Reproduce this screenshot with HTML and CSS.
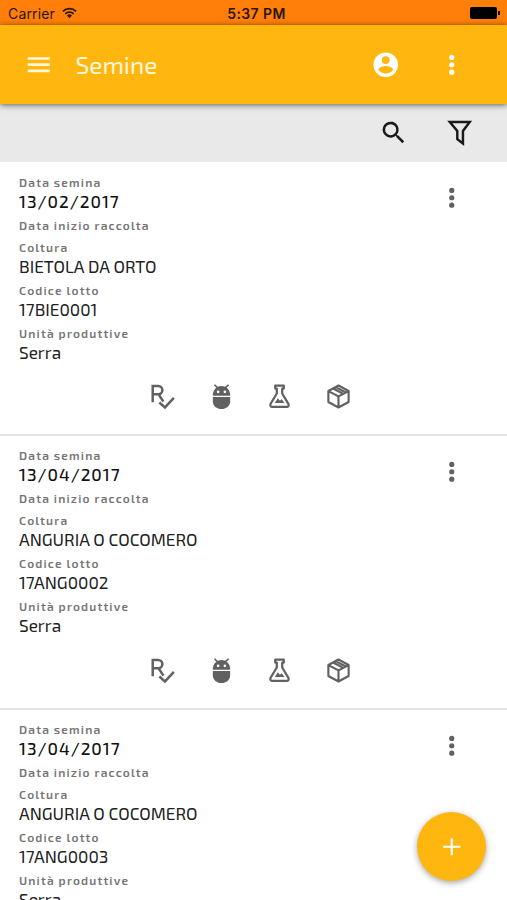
FILE: index.html
```html
<!DOCTYPE html>
<html lang="it">

<head>
    <meta charset="utf-8">
    <title>Semine</title>
    <link rel="stylesheet" href="styles.css">
</head>

<body>
    <svg class="defs">
        <symbol id="dots" viewBox="0 0 24 24">
            <circle cx="12" cy="6" r="2.1" /><circle cx="12" cy="12" r="2.1" /><circle cx="12" cy="18" r="2.1" />
        </symbol>
        <symbol id="register" viewBox="0 0 24 24">
            <path d="M3.300 17V2.600h4.900a3.700 3.700 0 0 1 0 7.400H3.300M8.500 10l4.300 6.600M9.200 17.300l5 4.400 7.900-8.400" fill="none" stroke="currentColor" stroke-width="2.200" />
        </symbol>
        <symbol id="bug" viewBox="0 0 24 24">
            <path d="M4.300 12.500V16.500c0 4 3.500 6.700 7.700 6.700s7.700-2.700 7.700-6.700v-4zM16.500 4.300l2.300-2.300-1-1-2.500 2.400a7.700 7.700 0 0 0-6.600 0L6.200 1l-1 1 2.300 2.300a7.700 7.700 0 0 0-3.200 5.900v1.200h15.400v-1.200a7.700 7.700 0 0 0-3.200-5.900zM9 9a1.200 1.200 0 1 1 0-2.400A1.200 1.200 0 0 1 9 9zm6 0a1.200 1.200 0 1 1 0-2.400A1.200 1.200 0 0 1 15 9z" />
        </symbol>
        <symbol id="flask" viewBox="0 0 24 24">
            <path d="M8.200 2.300h7.600v2.600h-1.400v4.400l5.500 9.200c.8 1.400-.1 2.800-1.500 2.800H5.600c-1.400 0-2.300-1.400-1.500-2.800l5.500-9.200V4.900H8.200z" fill="none" stroke="currentColor" stroke-width="2" stroke-linejoin="round" />
            <path d="M7.800 17.800l2.700-4.300 1.900 2.300 1.500-1.300 2.500 3.300z" />
        </symbol>
        <symbol id="box" viewBox="0 0 24 24">
            <path d="M12 2.200l9 4.900v9.800l-9 4.900-9-4.900V7.100zM3 7.200l9 4.700 9-4.700M12 11.900v9.700M7.200 4.900l9 4.800M9.500 3.700l9 4.800" fill="none" stroke="currentColor" stroke-width="1.900" stroke-linejoin="round" />
        </symbol>
    </svg>

    <div class="status">
        <div class="carrier">
            <span>Carrier</span>
            <svg class="wifi" viewBox="0 0 16 12">
                <path d="M1 4.300a10 10 0 0 1 14 0M3.500 6.900a6.400 6.400 0 0 1 9 0" fill="none" stroke="#2b1500" stroke-width="1.900" />
                <path d="M5.300 8.700a3.900 3.900 0 0 1 5.400 0L8 11.500z" fill="#2b1500" />
            </svg>
        </div>
        <div class="clock">5:37 PM</div>
        <div class="battery"><i></i></div>
    </div>

    <header class="toolbar">
        <svg class="icon menu" viewBox="0 0 24 24"><path d="M3 5.800h18v2.200H3zm0 5h18v2.200H3zm0 5h18v2.200H3z" /></svg>
        <h1>Semine</h1>
        <svg class="icon account" viewBox="0 0 24 24">
            <path d="M12 2a10 10 0 1 0 0 20 10 10 0 0 0 0-20zm0 3a3.200 3.200 0 1 1 0 6.400A3.200 3.200 0 0 1 12 5zm0 14.200c-2.500 0-4.700-1.200-6-3.100 0-2 4-3.100 6-3.100s6 1.100 6 3.100a7.200 7.200 0 0 1-6 3.100z" />
        </svg>
        <svg class="icon"><use href="#dots" /></svg>
    </header>

    <div class="filters">
        <svg class="icon" viewBox="0 0 24 24">
            <path d="M15.500 14h-.8l-.3-.3a6.500 6.500 0 1 0-.7.7l.3.3v.8l5 5 1.500-1.500zm-6 0a4.500 4.500 0 1 1 0-9 4.500 4.500 0 0 1 0 9z" />
        </svg>
        <svg class="icon" viewBox="0 0 24 24">
            <path d="M3.900 3.300h16.200l-5.500 7.300v10.200l-4.600-3.600v-6.600z" fill="none" stroke="currentColor" stroke-width="2" />
        </svg>
    </div>

    <main>
        <section class="card">
            <div class="card-body">
                <dl>
                    <dt>Data semina</dt>
                    <dd class="date">13/02/2017</dd>
                    <dt>Data inizio raccolta</dt>
                    <dt>Coltura</dt>
                    <dd>BIETOLA DA ORTO</dd>
                    <dt>Codice lotto</dt>
                    <dd>17BIE0001</dd>
                    <dt>Unità produttive</dt>
                    <dd>Serra</dd>
                </dl>
                <svg class="icon more"><use href="#dots" /></svg>
            </div>
            <div class="actions">
                <svg class="icon"><use href="#register" /></svg>
                <svg class="icon"><use href="#bug" /></svg>
                <svg class="icon"><use href="#flask" /></svg>
                <svg class="icon"><use href="#box" /></svg>
            </div>
        </section>

        <section class="card">
            <div class="card-body">
                <dl>
                    <dt>Data semina</dt>
                    <dd class="date">13/04/2017</dd>
                    <dt>Data inizio raccolta</dt>
                    <dt>Coltura</dt>
                    <dd>ANGURIA O COCOMERO</dd>
                    <dt>Codice lotto</dt>
                    <dd>17ANG0002</dd>
                    <dt>Unità produttive</dt>
                    <dd>Serra</dd>
                </dl>
                <svg class="icon more"><use href="#dots" /></svg>
            </div>
            <div class="actions">
                <svg class="icon"><use href="#register" /></svg>
                <svg class="icon"><use href="#bug" /></svg>
                <svg class="icon"><use href="#flask" /></svg>
                <svg class="icon"><use href="#box" /></svg>
            </div>
        </section>

        <section class="card">
            <div class="card-body">
                <dl>
                    <dt>Data semina</dt>
                    <dd class="date">13/04/2017</dd>
                    <dt>Data inizio raccolta</dt>
                    <dt>Coltura</dt>
                    <dd>ANGURIA O COCOMERO</dd>
                    <dt>Codice lotto</dt>
                    <dd>17ANG0003</dd>
                    <dt>Unità produttive</dt>
                    <dd>Serra</dd>
                </dl>
                <svg class="icon more"><use href="#dots" /></svg>
            </div>
        </section>
    </main>

    <div class="fab">
        <svg class="icon" viewBox="0 0 24 24"><path d="M19 12.900h-6.100V19h-1.800v-6.100H5v-1.800h6.100V5h1.800v6.100H19z" /></svg>
    </div>
</body>

</html>
```
FILE: styles.css
```css
body {
    margin: 0;
    height: 900px;
    overflow: hidden;
    background: #fff;
    color: #212121;
    font-family: "Exo 2", Roboto, sans-serif;
    display: flex;
    flex-direction: column;
}

.defs {
    display: none;
}

.icon {
    display: block;
    width: 29.5px;
    height: 29.5px;
    fill: currentColor;
    flex: none;
}

.status {
    display: grid;
    grid-template-columns: 1fr auto 1fr;
    align-items: center;
    flex: none;
    height: 25px;
    padding: 2px 7px 0 8px;
    box-sizing: border-box;
    background: #ff7f0a;
    color: #2b1500;
    font: 14px Inter, sans-serif;
}

.carrier {
    display: flex;
    align-items: center;
    gap: 7px;
    letter-spacing: .15px;
}

.wifi {
    width: 15px;
    height: 12px;
    margin-top: -2px;
}

.clock {
    margin-left: 5px;
    font-weight: 600;
    letter-spacing: .4px;
}

.battery {
    display: flex;
    align-items: center;
    justify-content: flex-end;
    margin-top: -2px;
}

.battery::before {
    content: "";
    width: 27px;
    height: 12px;
    border-radius: 2px;
    background: #000;
}

.battery i {
    width: 2px;
    height: 4px;
    margin-left: 1px;
    background: #000;
}

.toolbar {
    display: flex;
    align-items: center;
    flex: none;
    height: 79px;
    padding: 0 40.500px 0 24px;
    box-sizing: border-box;
    background: #ffb60f;
    color: #fff;
    box-shadow: 0 1px 6px rgba(0, 0, 0, .6);
    z-index: 1;
}

.toolbar h1 {
    flex: 1;
    margin: -1px 0 0 22px;
    font-size: 24.500px;
    font-weight: 400;
    color: #fff8dc;
}

.menu {
    color: #fff8dc;
}

.account {
    margin-right: 36.500px;
}

.filters {
    display: flex;
    align-items: center;
    justify-content: flex-end;
    gap: 36.500px;
    flex: none;
    height: 58px;
    padding-right: 33px;
    background: #e9e9e9;
    color: #1a1a1a;
}

.card {
    height: 273.800px;
    box-sizing: border-box;
    padding: 10.500px 40.500px 0 19px;
    border-bottom: 2px solid #e4e4e4;
}

.card-body {
    display: flex;
    justify-content: space-between;
}

dl {
    margin: 0;
}

dt {
    height: 18px;
    margin-bottom: 4px;
    line-height: 18px;
    font-size: 12px;
    font-weight: 600;
    letter-spacing: 1.180px;
    color: #757575;
}

dd {
    height: 21px;
    margin: -4px 0 4px;
    line-height: 21px;
    font-size: 17.200px;
}

.date {
    font-weight: 500;
    letter-spacing: 1px;
    color: #111;
}

.more {
    margin-top: 10.500px;
    color: #616161;
}

.actions {
    display: flex;
    gap: 31.500px;
    margin: 16.500px 0 0 130px;
    color: #616161;
}

.actions .icon {
    width: 27px;
    height: 27px;
}

.fab {
    position: fixed;
    right: 21px;
    bottom: 19px;
    display: flex;
    align-items: center;
    justify-content: center;
    width: 69px;
    height: 69px;
    border-radius: 50%;
    background: #ffb60f;
    color: #fff;
    box-shadow: 0 2px 6px rgba(0, 0, 0, .35);
}
```
